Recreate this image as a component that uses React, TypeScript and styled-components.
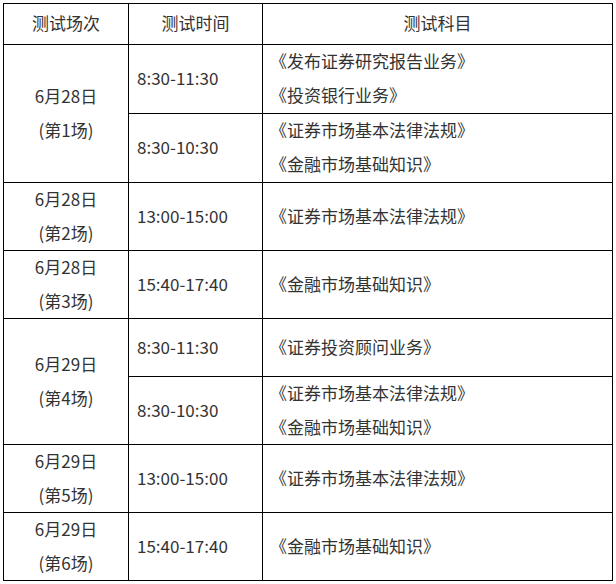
import React from "react";
import styled, { createGlobalStyle } from "styled-components";

const Global = createGlobalStyle`
  html, body { margin: 0; padding: 0; background: #fff; }
  body { font-family: "Noto Sans CJK SC", "Microsoft YaHei", sans-serif; }
`;

const Wrap = styled.div`
  padding: 3px;
`;

const Grid = styled.div`
  display: grid;
  grid-template-columns: 125px 134px 350px;
  grid-template-rows: 41px 69px 69px 68px 68px 58px 68px 68px 68px;
  width: 610px;
  border-top: 1px solid #000;
  border-left: 1px solid #000;
  box-sizing: border-box;
  color: #333;
  font-size: 17px;
  line-height: 34px;
`;

const Cell = styled.div<{ $align?: "center" | "left"; $span?: number; $pad?: number }>`
  grid-row: span ${(p) => p.$span ?? 1};
  border-right: 1px solid #000;
  border-bottom: 1px solid #000;
  display: flex;
  flex-direction: column;
  justify-content: center;
  align-items: ${(p) => (p.$align === "left" ? "flex-start" : "center")};
  padding-left: ${(p) => p.$pad ?? 0}px;
  padding-bottom: 2px;
  white-space: nowrap;
  overflow: hidden;
`;

const Line = styled.div``;

type Sub = { time: string; subjects: string[] };
type Session = { date: string; no: number; subs: Sub[] };

const data: Session[] = [
  {
    date: "6月28日",
    no: 1,
    subs: [
      { time: "8:30-11:30", subjects: ["《发布证券研究报告业务》", "《投资银行业务》"] },
      { time: "8:30-10:30", subjects: ["《证券市场基本法律法规》", "《金融市场基础知识》"] },
    ],
  },
  { date: "6月28日", no: 2, subs: [{ time: "13:00-15:00", subjects: ["《证券市场基本法律法规》"] }] },
  { date: "6月28日", no: 3, subs: [{ time: "15:40-17:40", subjects: ["《金融市场基础知识》"] }] },
  {
    date: "6月29日",
    no: 4,
    subs: [
      { time: "8:30-11:30", subjects: ["《证券投资顾问业务》"] },
      { time: "8:30-10:30", subjects: ["《证券市场基本法律法规》", "《金融市场基础知识》"] },
    ],
  },
  { date: "6月29日", no: 5, subs: [{ time: "13:00-15:00", subjects: ["《证券市场基本法律法规》"] }] },
  { date: "6月29日", no: 6, subs: [{ time: "15:40-17:40", subjects: ["《金融市场基础知识》"] }] },
];

export default function App() {
  return (
    <Wrap>
      <Global />
      <Grid>
        <Cell>测试场次</Cell>
        <Cell>测试时间</Cell>
        <Cell>测试科目</Cell>
        {data.map((s) => (
          <React.Fragment key={s.no}>
            <Cell $span={s.subs.length}>
              <Line>{s.date}</Line>
              <Line>(第{s.no}场)</Line>
            </Cell>
            {s.subs.map((sub, i) => (
              <React.Fragment key={i}>
                <Cell $align="left" $pad={8} style={{ gridColumn: 2 }}>
                  {sub.time}
                </Cell>
                <Cell $align="left" $pad={7}>
                  {sub.subjects.map((t) => (
                    <Line key={t}>{t}</Line>
                  ))}
                </Cell>
              </React.Fragment>
            ))}
          </React.Fragment>
        ))}
      </Grid>
    </Wrap>
  );
}
